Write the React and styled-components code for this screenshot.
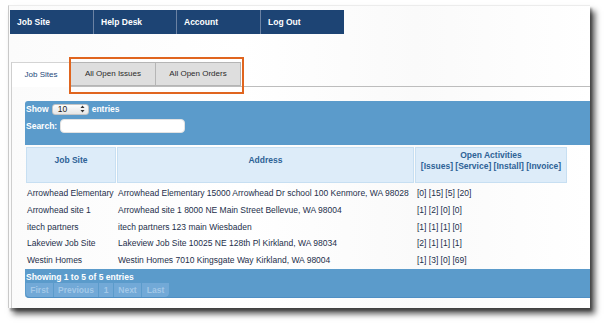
import React from "react";
import styled, { createGlobalStyle } from "styled-components";

const Global = createGlobalStyle`
  html, body { margin: 0; padding: 0; background: #fff; }
  body { font-family: "Liberation Sans", Arial, sans-serif; }
  * { box-sizing: border-box; }
`;

const Stage = styled.div`
  width: 606px;
  height: 324px;
  padding: 5px 0 0 8px;
  overflow: hidden;
`;

const Window = styled.div`
  position: relative;
  width: 582px;
  height: 303px;
  background: linear-gradient(90deg, #fbfbfb, #fff 40%, #fafafa 70%, #fff);
  border-left: 1px solid #c9c9c9;
  border-top: 1px solid #ececec;
  box-shadow: 5px 6px 6px rgba(0, 0, 0, 0.65), 2px 3px 2px rgba(0,0,0,0.3);
  padding: 4px 0 0 1px;
  overflow: hidden;
`;

const Nav = styled.nav`
  display: flex;
  height: 24px;
`;

const NavItem = styled.div`
  width: ${p => p.$w}px;
  height: 24px;
  background: #1d4474;
  border-right: ${p => (p.$last ? "none" : "1px solid #6b82a3")};
  color: #fff;
  font-weight: bold;
  font-size: 8.5px;
  line-height: 24px;
  padding-left: 7px;
`;

const TabArea = styled.div`
  margin: 28px 0 0 1px;
  border-left: 1px solid #cfcfcf;
  height: 300px;
`;

const TabBar = styled.div`
  display: flex;
  align-items: flex-end;
  height: 25px;
  border-bottom: 1px solid #bdbdbd;
`;

const Tab = styled.div`
  width: ${p => p.$w}px;
  height: ${p => (p.$active ? "25px" : "24px")};
  margin-bottom: ${p => (p.$active ? "-1px" : "0")};
  background: ${p => (p.$active ? "#fff" : "#dedede")};
  border: 1px solid ${p => (p.$active ? "#d4d4d4" : "#b5b5b5")};
  border-left: ${p => (p.$active ? "none" : "1px solid #b5b5b5")};
  border-bottom: ${p => (p.$active ? "none" : "1px solid #b5b5b5")};
  margin-left: ${p => (p.$active ? "0" : "-1px")};
  color: ${p => (p.$active ? "#24497a" : "#2a2a2a")};
  font-size: 8px;
  display: flex;
  align-items: center;
  justify-content: center;
  padding-bottom: 1px;
`;

const Highlight = styled.div`
  position: absolute;
  left: 60px;
  top: 51px;
  width: 175px;
  height: 37px;
  border: 2px solid #e0651f;
  pointer-events: none;
`;

const Panel = styled.div`
  margin: 14px 0 0 13px;
  width: 580px;
`;

const Toolbar = styled.div`
  height: 44px;
  background: #5b9bcb;
  border-top-left-radius: 3px;
  padding: 2px 0 0 1px;
  display: flex;
  flex-direction: column;
  gap: 4px;
`;

const ToolRow = styled.div`
  display: flex;
  align-items: center;
  gap: 3px;
  color: #fff;
  font-weight: bold;
  font-size: 8.5px;
  height: ${p => p.$h}px;
`;

const Select = styled.div`
  width: 37px;
  height: 11px;
  border-radius: 3px;
  background: linear-gradient(#fdfdfd, #e6e6e6);
  border: 1px solid #c5c5c5;
  display: flex;
  align-items: center;
  justify-content: space-between;
  padding: 0 3px 0 5px;
  color: #222;
  font-weight: normal;
  font-size: 8.5px;
`;

const Input = styled.div`
  width: 125px;
  height: 14px;
  background: #fff;
  border-radius: 4px;
  border: 1px solid #e2e2e2;
`;

const Table = styled.div`
  margin: 2px 0 0 1px;
  width: 541px;
`;

const HeadRow = styled.div`
  display: grid;
  grid-template-columns: 90px 297px 152px;
  gap: 1px;
  height: 36px;
`;

const HeadCell = styled.div`
  background: #ddecf9;
  border: 1px solid #c7dff2;
  color: #2d6296;
  font-weight: bold;
  font-size: 8.5px;
  text-align: center;
  line-height: 10.5px;
  padding-top: ${p => (p.$two ? "2px" : "7px")};
`;

const Body = styled.div`
  padding-top: 2px;
`;

const Row = styled.div`
  display: grid;
  grid-template-columns: 91px 298px 152px;
  height: 16.75px;
  line-height: 16.75px;
  font-size: 8.5px;
  color: #1d2f4b;
  white-space: nowrap;
`;

const Cell = styled.div`
  padding-left: ${p => p.$pl || 1}px;
`;

const Footer = styled.div`
  height: 29px;
  background: #5b9bcb;
  border-bottom: 1px solid #4f8fc4;
  border-bottom-left-radius: 4px;
  padding: 3px 0 0 1px;
`;

const Info = styled.div`
  color: #fff;
  font-weight: bold;
  font-size: 8.5px;
  line-height: 10px;
`;

const Pager = styled.div`
  display: flex;
  margin-top: 1px;
  height: 14px;
  width: max-content;
  border-radius: 0 0 4px 4px;
  overflow: hidden;
`;

const PageBtn = styled.div`
  width: ${p => p.$w}px;
  background: #72a9d7;
  border-right: 1px solid #5b9bcb;
  color: #a3c8e8;
  font-weight: bold;
  font-size: 8.5px;
  text-align: center;
  line-height: 14px;
  &:first-child { border-bottom-left-radius: 4px; }
  &:last-child { border-right: none; border-bottom-right-radius: 4px; }
`;

const rows = [
  ["Arrowhead Elementary", "Arrowhead Elementary 15000 Arrowhead Dr school 100 Kenmore, WA 98028", "[0] [15] [5] [20]"],
  ["Arrowhead site 1", "Arrowhead site 1 8000 NE Main Street Bellevue, WA 98004", "[1] [2] [0] [0]"],
  ["itech partners", "itech partners 123 main Wiesbaden", "[1] [1] [1] [0]"],
  ["Lakeview Job Site", "Lakeview Job Site 10025 NE 128th Pl Kirkland, WA 98034", "[2] [1] [1] [1]"],
  ["Westin Homes", "Westin Homes 7010 Kingsgate Way Kirkland, WA 98004", "[1] [3] [0] [69]"],
];

const Spinner = () => (
  <svg width="5" height="8" viewBox="0 0 5 8">
    <path d="M2.5 0.5 L4.5 3 L0.5 3 Z" fill="#333" />
    <path d="M2.5 7.5 L4.5 5 L0.5 5 Z" fill="#333" />
  </svg>
);

export default function App() {
  return (
    <Stage>
      <Global />
      <Window>
        <Nav>
          <NavItem $w={84}>Job Site</NavItem>
          <NavItem $w={83}>Help Desk</NavItem>
          <NavItem $w={84}>Account</NavItem>
          <NavItem $w={83} $last>Log Out</NavItem>
        </Nav>
        <TabArea>
          <TabBar>
            <Tab $active $w={59}>Job Sites</Tab>
            <Tab $w={86}>All Open Issues</Tab>
            <Tab $w={86}>All Open Orders</Tab>
          </TabBar>
          <Panel>
            <Toolbar>
              <ToolRow $h={12}>
                Show
                <Select>
                  <span>10</span>
                  <Spinner />
                </Select>
                entries
              </ToolRow>
              <ToolRow $h={14}>
                Search:
                <Input />
              </ToolRow>
            </Toolbar>
            <Table>
              <HeadRow>
                <HeadCell>Job Site</HeadCell>
                <HeadCell>Address</HeadCell>
                <HeadCell $two>
                  Open Activities
                  <br />
                  [Issues] [Service] [Install] [Invoice]
                </HeadCell>
              </HeadRow>
              <Body>
                {rows.map(r => (
                  <Row key={r[0]}>
                    <Cell>{r[0]}</Cell>
                    <Cell>{r[1]}</Cell>
                    <Cell $pl={2}>{r[2]}</Cell>
                  </Row>
                ))}
              </Body>
            </Table>
            <Footer>
              <Info>Showing 1 to 5 of 5 entries</Info>
              <Pager>
                <PageBtn $w={28}>First</PageBtn>
                <PageBtn $w={45}>Previous</PageBtn>
                <PageBtn $w={15}>1</PageBtn>
                <PageBtn $w={28}>Next</PageBtn>
                <PageBtn $w={27}>Last</PageBtn>
              </Pager>
            </Footer>
          </Panel>
        </TabArea>
        <Highlight />
      </Window>
    </Stage>
  );
}
